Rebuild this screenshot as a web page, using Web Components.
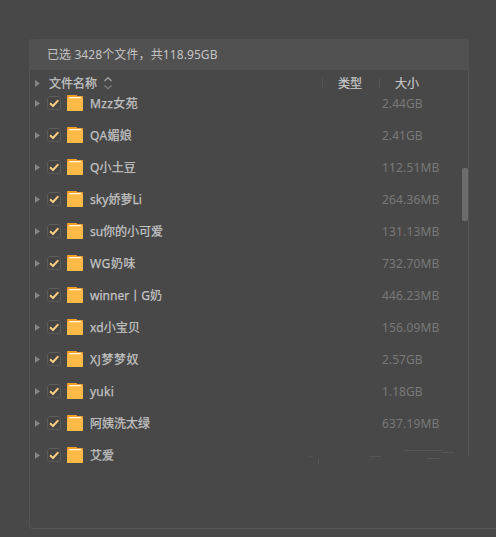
<!DOCTYPE html>
<html lang="zh-CN">
<head>
<meta charset="utf-8">
<title>文件列表</title>
<style>
html,body{margin:0;height:100%;background:#484848;overflow:hidden}
body{font:12px/18px "Noto Sans","Noto Sans CJK SC",sans-serif;color:#c4c4c4}
</style>
</head>
<body>
<file-panel summary="已选 3428个文件，共118.95GB">
<file-row size="2.44GB" fit="48">Mzz女苑</file-row>
<file-row size="2.41GB" fit="42">QA媚娘</file-row>
<file-row size="112.51MB" fit="46">Q小土豆</file-row>
<file-row size="264.36MB" fit="52">sky娇萝Li</file-row>
<file-row size="131.13MB" fit="73">su你的小可爱</file-row>
<file-row size="732.70MB" fit="46">WG奶味</file-row>
<file-row size="446.23MB" fit="72">winner丨G奶</file-row>
<file-row size="156.09MB" fit="50">xd小宝贝</file-row>
<file-row size="2.57GB" fit="49">XJ梦梦奴</file-row>
<file-row size="1.18GB" fit="24">yuki</file-row>
<file-row size="637.19MB" fit="60">阿姨洗太绿</file-row>
<file-row size="" fit="24">艾爱</file-row>
</file-panel>
<script>
class ExpandArrow extends HTMLElement{
  constructor(){super();this.attachShadow({mode:'open'}).innerHTML=`
<style>:host{display:block;width:5px;height:7px}svg{display:block}</style>
<svg width="5" height="7"><path d="M0 0 5 3.5 0 7Z" fill="#858585"/></svg>`}
}
class CheckMark extends HTMLElement{
  constructor(){super();this.attachShadow({mode:'open'}).innerHTML=`
<style>:host{display:block;width:14px;height:14px}svg{display:block}</style>
<svg width="14" height="14"><rect x=".5" y=".5" width="13" height="13" rx="2.5" fill="#454545" stroke="#5b5b5b"/><path d="M3 7.2 6 10 11.3 4.3" fill="none" stroke="#f3ca80" stroke-width="2"/></svg>`}
}
class FolderIcon extends HTMLElement{
  constructor(){super();this.attachShadow({mode:'open'}).innerHTML=`
<style>:host{display:block;width:16px;height:16px}svg{display:block}</style>
<svg width="16" height="16"><path d="M.5 0H9.5L10.5 1H15.5L16 1.5V8H0V.5Z" fill="#ef9f2c"/><path d="M0 3H16V15.5L15.5 16H.5L0 15.5Z" fill="#ffb947"/><path d="M2 2H14V3H2Z" fill="#fff3dc"/><path d="M2 3H14V4H2Z" fill="#ffc869"/></svg>`}
}
class SortIcon extends HTMLElement{
  constructor(){super();this.attachShadow({mode:'open'}).innerHTML=`
<style>:host{display:block;width:8px;height:13px}svg{display:block}</style>
<svg width="8" height="13" fill="none"><path d="M.5 4 4 .7 7.5 4" stroke="#a5a5a5" stroke-width="1.2"/><path d="M.5 8.5 4 11.8 7.5 8.5" stroke="#808080" stroke-width="1.2"/></svg>`}
}
class FileRow extends HTMLElement{
  constructor(){super();this.attachShadow({mode:'open'}).innerHTML=`
<style>:host{display:grid;grid-template-columns:12px 20px 23px 292px 1fr;align-items:center;height:32px;padding-left:5px;white-space:nowrap}
.name{color:#c2c2c2;-webkit-text-stroke:.25px #c2c2c2}.size{color:#797979}span{justify-self:start;padding-top:2px}</style>
<expand-arrow></expand-arrow><check-mark></check-mark><folder-icon></folder-icon>
<span class="name"><slot></slot></span><span class="size"></span>`}
  connectedCallback(){
    const name=this.shadowRoot.querySelector('.name'),size=this.shadowRoot.querySelector('.size');
    size.textContent=this.getAttribute('size');
    const fit=(el,w,n)=>{if(n)el.style.letterSpacing=((w-el.getBoundingClientRect().width)/n)+'px'};
    fit(name,+this.getAttribute('fit'),[...this.textContent].length);
    fit(size,size.textContent.length>6?57.4:40.6,size.textContent.length);
  }
}
class FilePanel extends HTMLElement{
  constructor(){super();this.attachShadow({mode:'open'}).innerHTML=`
<style>
:host{display:block;position:relative;margin:39px 0 0 29px;height:490px;box-sizing:border-box;border-left:1px solid #555;border-bottom:1px solid #555;border-radius:3px 0 0 4px}
.bar{height:31px;width:440px;margin-left:-1px;box-sizing:border-box;padding-left:18px;background:#515151;border-radius:4px 4px 0 0;line-height:31px;white-space:nowrap}
.head{height:26px;display:grid;grid-template-columns:14px 55px 218px 57px 1fr;align-items:center;padding-left:5px;width:433px}
.head span{padding-top:2px;-webkit-text-stroke:.25px #c4c4c4}
.col{border-left:1px solid #545454;height:10px;display:flex;align-items:center;padding-left:15px}
.list{margin-top:-9px}
.edge{position:absolute;left:438px;top:31px;width:1px;height:386px;background:#555}
.thumb{position:absolute;left:432px;top:129px;width:6px;height:53px;border-radius:2px;background:#6c6c6c}
.trace{position:absolute;height:1px;background:#555}
</style>
<div class="bar"><span class="sum"></span></div>
<div class="head"><expand-arrow></expand-arrow><span>文件名称</span><sort-icon></sort-icon><div class="col"><span>类型</span></div><div class="col"><span>大小</span></div></div>
<div class="list"><slot></slot></div>
<div class="edge"></div><div class="thumb"></div>
<i class="trace" style="left:374px;top:411px;width:39px"></i>
<i class="trace" style="left:412px;top:413px;width:12px"></i>
<i class="trace" style="left:397px;top:419px;width:13px"></i>
<i class="trace" style="left:339px;top:417px;width:12px"></i>
<i class="trace" style="left:279px;top:417px;width:2px"></i>
<i class="trace" style="left:288px;top:420px;width:1px;height:5px"></i>`}
  connectedCallback(){
    const s=this.shadowRoot.querySelector('.sum'),t=this.getAttribute('summary');
    s.textContent=t;
    s.style.letterSpacing=((170.6-s.getBoundingClientRect().width)/[...t].length)+'px';
  }
}
customElements.define('expand-arrow',ExpandArrow);
customElements.define('check-mark',CheckMark);
customElements.define('folder-icon',FolderIcon);
customElements.define('sort-icon',SortIcon);
customElements.define('file-panel',FilePanel);
customElements.define('file-row',FileRow);
</script>
</body>
</html>
